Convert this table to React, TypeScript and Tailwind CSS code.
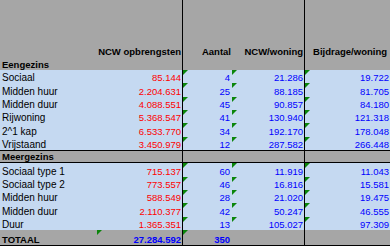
import React from 'react';

type Row = [string, string, string, string, string];

const eengezins: Row[] = [
  ['Sociaal', '85.144', '4', '21.286', '19.722'],
  ['Midden huur', '2.204.631', '25', '88.185', '81.705'],
  ['Midden duur', '4.088.551', '45', '90.857', '84.180'],
  ['Rijwoning', '5.368.547', '41', '130.940', '121.318'],
  ['2^1 kap', '6.533.770', '34', '192.170', '178.048'],
  ['Vrijstaand', '3.450.979', '12', '287.582', '266.448'],
];

const meergezins: Row[] = [
  ['Sociaal type 1', '715.137', '60', '11.919', '11.043'],
  ['Sociaal type 2', '773.557', '46', '16.816', '15.581'],
  ['Midden huur', '588.549', '28', '21.020', '19.475'],
  ['Midden duur', '2.110.377', '42', '50.247', '46.555'],
  ['Duur', '1.365.351', '13', '105.027', '97.309'],
];

const cols = 'grid grid-cols-[97px_86px_49px_73px_85px]';

// excel "number stored as text" marker
const Flag = () => (
  <svg className="absolute top-0 left-0" width="5" height="5" viewBox="0 0 5 5">
    <polygon points="0,0 5,0 0,5" fill="#0b850b" />
  </svg>
);

const DataRow: React.FC<{ row: Row }> = ({ row }) => (
  <div className={`${cols} h-[13.33px] bg-[#c5d9f1]`}>
    <div className="flex items-end pl-[2px] text-[10px] text-black">{row[0]}</div>
    <div className="flex items-end justify-end pr-[1px] border-r border-black text-[#ff0000]">{row[1]}</div>
    <div className="relative flex items-end justify-end pr-[2px] text-[#0000ff]">
      <Flag />
      {row[2]}
    </div>
    <div className="relative flex items-end justify-end pr-[1px] border-r border-black text-[#0000ff]">
      <Flag />
      {row[3]}
    </div>
    <div className="relative flex items-end justify-end pr-[1px] text-[#0000ff]">
      <Flag />
      {row[4]}
    </div>
  </div>
);

const GroupRow: React.FC<{ label: string; lined?: boolean }> = ({ label, lined }) => (
  <div className={`${cols} h-[13.33px] bg-[#a6a6a6] font-bold ${lined ? 'border-y border-black' : ''}`}>
    <div className="flex items-end pl-[2px]">{label}</div>
    <div className="border-r border-black" />
    <div />
    <div className="border-r border-black" />
    <div />
  </div>
);

export default function App() {
  return (
    <div className="w-[390px] h-[247px] bg-white overflow-hidden font-['Liberation_Sans',Arial,sans-serif] text-[9.5px] leading-[11px] text-black">
      <div className={`${cols} h-[56.7px] bg-[#a6a6a6] font-bold`}>
        <div />
        <div className="flex items-end justify-end pr-[1px] border-r border-black">NCW opbrengsten</div>
        <div className="flex items-end justify-end pr-[1px]">Aantal</div>
        <div className="flex items-end justify-end pr-[1px] border-r border-black">NCW/woning</div>
        <div className="flex items-end justify-end pr-[3px]">Bijdrage/woning</div>
      </div>
      <GroupRow label="Eengezins" />
      {eengezins.map(r => (
        <DataRow key={r[0]} row={r} />
      ))}
      <GroupRow label="Meergezins" lined />
      {meergezins.map(r => (
        <DataRow key={r[0] + r[2]} row={r} />
      ))}
      <div className={`${cols} h-[16px] bg-[#a6a6a6] font-bold border-b border-black`}>
        <div className="flex items-end pl-[2px]">TOTAAL</div>
        <div className="relative flex items-end justify-end pr-[1px] border-r border-black text-[#0000ff]">
          <Flag />
          27.284.592
        </div>
        <div className="relative flex items-end justify-end pr-[2px] text-[#0000ff]">
          <Flag />
          350
        </div>
        <div className="border-r border-black" />
        <div />
      </div>
    </div>
  );
}
